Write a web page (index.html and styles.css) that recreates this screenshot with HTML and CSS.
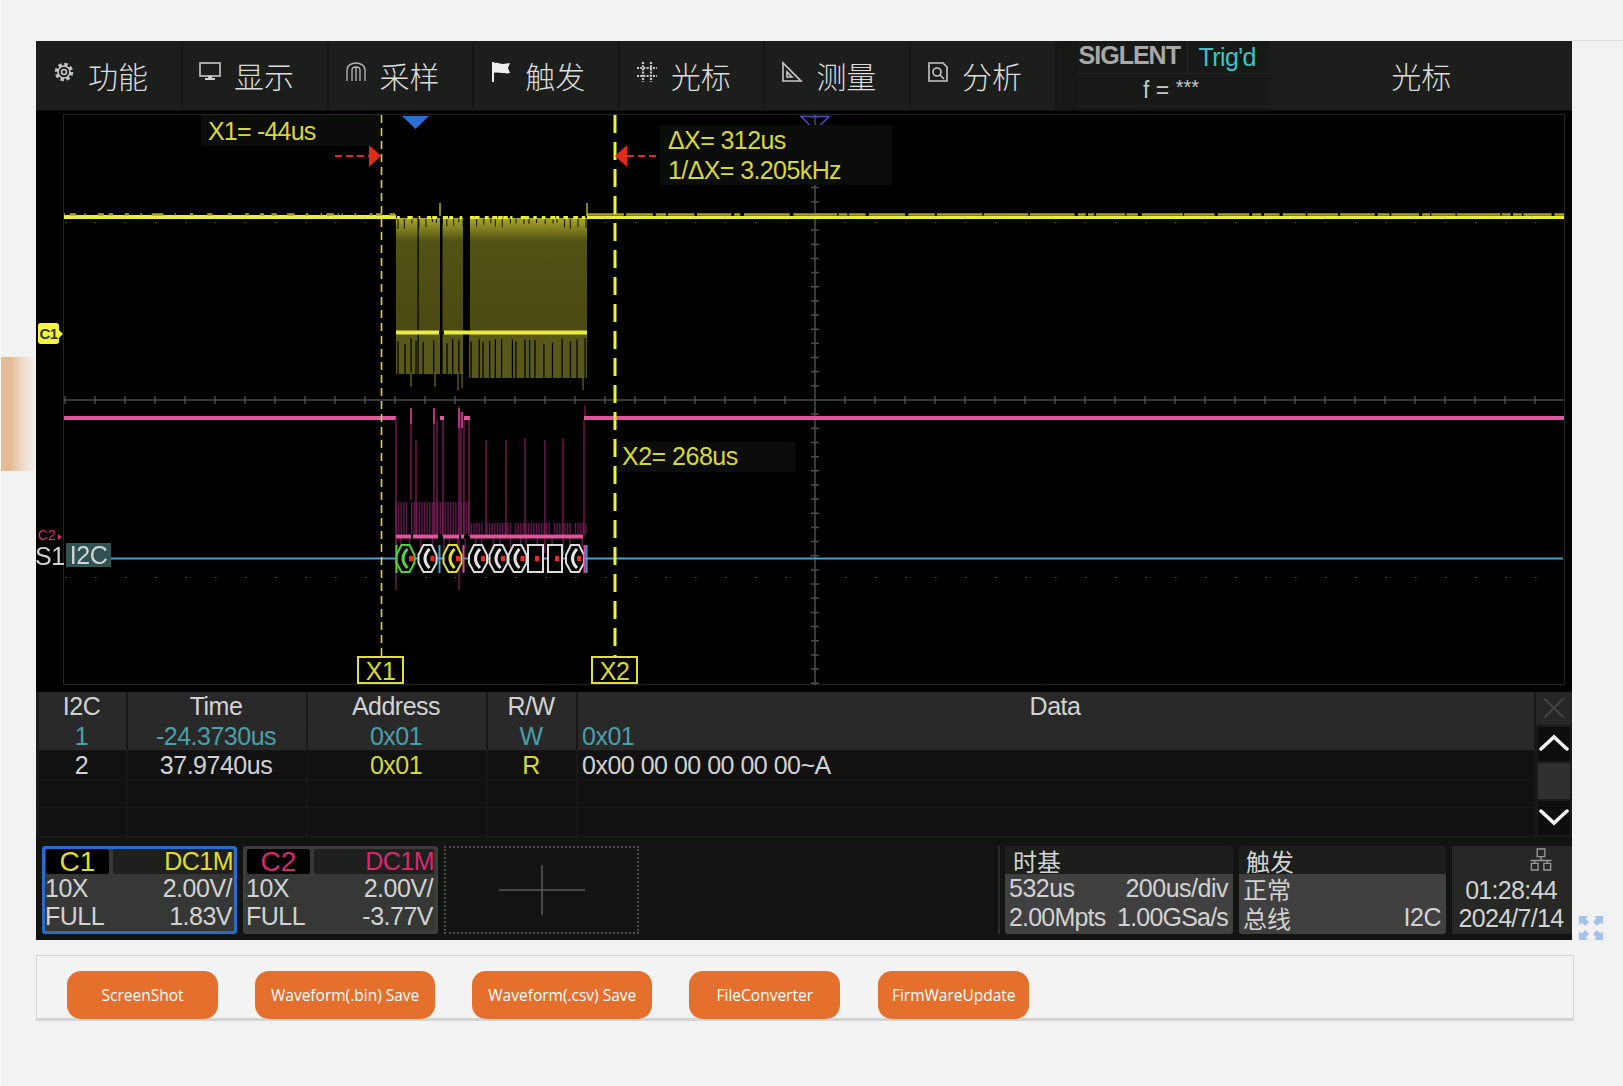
FILE: index.html
```html
<!DOCTYPE html>
<html lang="zh-CN">
<head>
  <meta charset="UTF-8" />
  <title>Web Control</title>
  <link rel="stylesheet" href="styles.css">
</head>
<body>
  <div class="side-glow"></div>
  <div class="top-rule"></div>

  <div class="page">
    <div class="scope-row">
      <div class="scope">

        <nav class="menu">
          <div class="menu-item">
            <svg class="menu-icon" viewBox="0 0 22 22"><circle cx="11" cy="11" r="7.5" class="ic-teeth"/><circle cx="11" cy="11" r="6" class="ic-line"/><circle cx="11" cy="11" r="2.5" class="ic-line"/></svg>
            <span>功能</span>
          </div>
          <div class="menu-item">
            <svg class="menu-icon" viewBox="0 0 22 22"><rect x="1" y="2" width="20" height="13" class="ic-line"/><path d="M9 15h4v2h3v2H6v-2h3z" class="ic-fill"/></svg>
            <span>显示</span>
          </div>
          <div class="menu-item">
            <svg class="menu-icon" viewBox="0 0 22 22"><path d="M2 20V9C2 4 7 2 11 2s9 2 9 7v11M7 20V9c0-2 2-3 4-3s4 1 4 3v11M11 6v14" class="ic-thin"/></svg>
            <span>采样</span>
          </div>
          <div class="menu-item">
            <svg class="menu-icon" viewBox="0 0 22 22"><path d="M2 1h2v20H2zM4 2c4-1 6 1 9 1 2 0 5-1 7-1l-2 5 2 5c-3 1-5 0-8 0-3 0-5-1-8 0z" class="ic-solid"/></svg>
            <span>触发</span>
          </div>
          <div class="menu-item">
            <svg class="menu-icon" viewBox="0 0 22 22"><path d="M7 1v20M15 1v20M1 7h20M1 15h20" class="ic-hash"/></svg>
            <span>光标</span>
          </div>
          <div class="menu-item">
            <svg class="menu-icon" viewBox="0 0 22 22"><path d="M2 2v18h18zM6 11v5h5z" class="ic-line"/></svg>
            <span>测量</span>
          </div>
          <div class="menu-item">
            <svg class="menu-icon" viewBox="0 0 22 22"><path d="M2 2h14l4 4v14H2z" class="ic-line"/><circle cx="10" cy="11" r="4" class="ic-line"/><path d="M13 14l4 4" class="ic-line"/></svg>
            <span>分析</span>
          </div>
          <div class="menu-gap"></div>
          <div class="brand">
            <div class="brand-logo">SIGLENT</div>
            <div class="brand-state">Trig'd</div>
            <div class="brand-freq">f = <span class="stars">***</span></div>
          </div>
          <div class="menu-title">光标</div>
        </nav>

        <div class="screen">
          <svg class="traces" viewBox="36 111 1536 581">
            <defs>
              <linearGradient id="burstFade" x1="0" y1="0" x2="0" y2="1">
                <stop offset="0" stop-color="#a8a82c"/>
                <stop offset="0.2" stop-color="#525214"/>
                <stop offset="1" stop-color="#4a4a12"/>
              </linearGradient>
            </defs>
            <rect x="63.5" y="114.5" width="1501" height="570" class="grid-frame"/>
            <g id="gridLayer"></g>
            <g id="yellowLayer"></g>
            <g id="pinkLayer"></g>
            <path d="M110 558.5H1563" class="bus-line"/>
            <g id="busLayer"></g>
            <path d="M381.5 115V656" class="cursor-thin"/>
            <path d="M615 115V656" class="cursor-thick"/>
            <path d="M402 116h27l-13.500 13z" class="marker-blue"/>
            <path d="M801 116.500h28l-14 14z" class="marker-purple"/>
            <path d="M335 156h34M627 156h32" class="cursor-arrow-line"/>
            <path d="M369 145l12 11-12 11zM627 145l-12 11 12 11z" class="cursor-arrow"/>
          </svg>

          <div class="readout readout-x1">X1= -44us</div>
          <div class="readout readout-delta">ΔX= 312us<br>1/ΔX= 3.205kHz</div>
          <div class="readout readout-x2">X2= 268us</div>
          <div class="cursor-tag cursor-tag-x1">X1</div>
          <div class="cursor-tag cursor-tag-x2">X2</div>
          <div class="ch-badge">C1</div>
          <div class="ch-mark">C2<i></i></div>
          <div class="bus-label">S1</div>
          <div class="bus-tag">I2C</div>
        </div>

        <div class="decode">
          <div class="decode-table">
            <div class="decode-row decode-head">
              <div>I2C</div><div>Time</div><div>Address</div><div>R/W</div><div>Data</div>
            </div>
            <div class="decode-row decode-sel">
              <div>1</div><div>-24.3730us</div><div>0x01</div><div>W</div><div class="cell-data">0x01</div>
            </div>
            <div class="decode-row">
              <div>2</div><div>37.9740us</div><div class="cell-yellow">0x01</div><div class="cell-yellow">R</div><div class="cell-data">0x00 00 00 00 00 00~A</div>
            </div>
            <div class="decode-row"><div></div><div></div><div></div><div></div><div></div></div>
            <div class="decode-row"><div></div><div></div><div></div><div></div><div></div></div>
          </div>
          <div class="decode-side">
            <div class="side-close"><svg viewBox="0 0 22 22"><path d="M2 2l18 18M20 2L2 20"/></svg></div>
            <div class="side-btn"><svg viewBox="0 0 32 20"><path d="M3 16L16 4l13 12"/></svg></div>
            <div class="side-thumb"></div>
            <div class="side-btn"><svg viewBox="0 0 32 20"><path d="M3 4l13 12L29 4"/></svg></div>
          </div>
        </div>

        <div class="status">
          <div class="channel channel-c1">
            <div class="channel-tabs">
              <div class="tab-name">C1</div>
              <div class="tab-coupling">DC1M</div>
            </div>
            <div class="info-row"><span>10X</span><span>2.00V/</span></div>
            <div class="info-row"><span>FULL</span><span>1.83V</span></div>
          </div>
          <div class="channel channel-c2">
            <div class="channel-tabs">
              <div class="tab-name">C2</div>
              <div class="tab-coupling">DC1M</div>
            </div>
            <div class="info-row"><span>10X</span><span>2.00V/</span></div>
            <div class="info-row"><span>FULL</span><span>-3.77V</span></div>
          </div>
          <div class="channel-add"><svg viewBox="0 0 86 50"><path d="M0 25h86M43 0v50"/></svg></div>

          <div class="status-divider"></div>
          <div class="info-box info-time">
            <div class="info-title">时基</div>
            <div class="info-body">
              <div class="info-row"><span>532us</span><span>200us/div</span></div>
              <div class="info-row"><span>2.00Mpts</span><span>1.00GSa/s</span></div>
            </div>
          </div>
          <div class="info-box info-trig">
            <div class="info-title">触发</div>
            <div class="info-body">
              <div class="info-row"><span class="info-cjk">正常</span></div>
              <div class="info-row"><span class="info-cjk">总线</span><span>I2C</span></div>
            </div>
          </div>
          <div class="clock">
            <svg class="clock-net" viewBox="0 0 22 24"><path d="M7 1h8v8H7zM1 16h7v7H1zM14 16h7v7h-7zM11 9v4M4.500 16v-3h13v3M0 13h22"/></svg>
            <div>01:28:44</div>
            <div>2024/7/14</div>
          </div>
        </div>
      </div>

      <svg class="expand" viewBox="0 0 24 24">
        <path d="M0 0h9L6.500 2.500 10 6 6 10 2.500 6.500 0 9zM24 0v9l-2.500-2.500L18 10l-4-4 3.500-3.500L15 0zM0 24v-9l2.500 2.500L6 14l4 4-3.500 3.500L9 24zM24 24h-9l2.500-2.500L14 18l4-4 3.500 3.500L24 15z"/>
      </svg>
    </div>

    <div class="actions">
      <button class="action-btn">ScreenShot</button>
      <button class="action-btn">Waveform(.bin) Save</button>
      <button class="action-btn">Waveform(.csv) Save</button>
      <button class="action-btn">FileConverter</button>
      <button class="action-btn action-btn-last">FirmWareUpdate</button>
    </div>
  </div>

  <script src="waveform.js"></script>
</body>
</html>
```

FILE: styles.css
```css
html, body {
  margin: 0;
  padding: 0;
  height: 100%;
}
body {
  background: #f2f2f2;
  box-shadow: inset 1px 0 #fafafa;
  font-family: "Liberation Sans", "Noto Sans CJK SC", sans-serif;
  overflow: hidden;
}
.side-glow {
  position: absolute;
  left: 1px;
  top: 357px;
  width: 35px;
  height: 114px;
  background: linear-gradient(90deg, #e6bd9b 0%, #e4b994 25%, #f0e2d6 70%, #f3efea 100%);
}
.top-rule {
  position: absolute;
  left: 1572px;
  right: 0;
  top: 40px;
  height: 1px;
  background: #dedede;
}
.page {
  padding: 41px 0 0 36px;
}
.scope-row {
  display: flex;
  align-items: flex-end;
  gap: 7px;
}
.scope {
  width: 1536px;
  height: 899px;
  background: #000;
  display: flex;
  flex-direction: column;
  color: #d2d2d2;
  font-size: 25px;
  letter-spacing: -0.5px;
  filter: blur(0.5px);
}

/* top menu */
.menu {
  height: 70px;
  flex: none;
  display: flex;
  background: #1c1e1c;
  border-bottom: 1px solid #111;
  box-sizing: border-box;
}
.menu-item {
  width: 145.6px;
  flex: none;
  box-sizing: border-box;
  padding: 0 0 2px 16px;
  display: flex;
  align-items: center;
  gap: 13px;
  border-right: 2px solid #141514;
  font-size: 30px;
  font-family: "Noto Sans CJK SC", sans-serif;
  font-weight: 300;
  letter-spacing: 0;
  color: #dcdcdc;
}
.menu-item:first-child {
  width: 147px;
  padding-left: 17px;
}
.menu-icon {
  width: 22px;
  height: 22px;
  flex: none;
  margin-top: -5px;
}
.ic-line { fill: none; stroke: #c8c8c8; stroke-width: 1.6; }
.ic-thin { fill: none; stroke: #b8b8b8; stroke-width: 1.3; }
.ic-fill { fill: #d0d0d0; }
.ic-solid { fill: #eee; }
.ic-teeth { fill: none; stroke: #c0c0c0; stroke-width: 3.5; stroke-dasharray: 3.4 2.5; }
.ic-hash { fill: none; stroke: #c8c8c8; stroke-width: 2.2; stroke-dasharray: 2 1.2; }
.menu-gap {
  width: 21px;
  flex: none;
  background: #161816;
}
.brand {
  width: 193px;
  flex: none;
  display: grid;
  grid-template-columns: 110px 83px;
  grid-template-rows: 33px 33px;
  background: #171917;
}
.brand-logo {
  color: #a8a8a8;
  font-weight: bold;
  font-size: 25px;
  letter-spacing: -1px;
  line-height: 29px;
  padding-left: 1px;
  border-right: 1px solid #242624;
  border-bottom: 1px solid #242624;
  overflow: hidden;
}
.brand-state {
  color: #3cc4c4;
  font-size: 25px;
  letter-spacing: -0.6px;
  line-height: 32px;
  padding-left: 11px;
  border-bottom: 1px solid #242624;
}
.brand-freq {
  grid-column: 1 / 3;
  text-align: center;
  font-size: 23px;
  line-height: 32px;
  color: #c8c8c8;
  border-bottom: 1px solid #242624;
  letter-spacing: 0;
  padding-right: 6px;
}
.stars {
  position: relative;
  top: -4px;
  font-size: 20px;
}
.menu-title {
  flex: 1;
  text-align: center;
  align-self: center;
  font-size: 30px;
  font-family: "Noto Sans CJK SC", sans-serif;
  font-weight: 300;
  letter-spacing: 0;
  color: #dcdcdc;
  margin-top: -2px;
}

/* waveform screen */
.screen {
  position: relative;
  height: 581px;
  flex: none;
  background: #000;
}
.traces {
  display: block;
  width: 1536px;
  height: 581px;
}
.grid-frame { fill: none; stroke: #242424; stroke-width: 1; }
.grid-axis { fill: none; stroke: #4c4c4c; stroke-width: 1.5; }
.grid-dot { fill: none; stroke: #555; stroke-width: 1; }
.bus-line { fill: none; stroke: #45a0d4; stroke-width: 2; }
.cursor-thin { fill: none; stroke: #d8d830; stroke-width: 1.6; stroke-dasharray: 8 5; }
.cursor-thick { fill: none; stroke: #f2f230; stroke-width: 3; stroke-dasharray: 18 9; }
.marker-blue { fill: #2f6fd0; }
.marker-purple { fill: none; stroke: #5050b8; stroke-width: 1.5; }
.cursor-arrow { fill: #e02a1c; }
.cursor-arrow-line { fill: none; stroke: #e02a1c; stroke-width: 2; stroke-dasharray: 7 4; }
.y-bright { fill: none; stroke: #ecec3c; stroke-width: 4; }
.y-mid { fill: none; stroke: #a8a428; stroke-width: 2.5; }
.y-thin { fill: none; stroke: #d8d838; stroke-width: 1.2; }
.y-notch { fill: none; stroke: #1c1c06; stroke-width: 1.1; }
.y-cut { fill: none; stroke: #000; stroke-width: 1.2; }
.p-bright { fill: none; stroke: #e0559c; stroke-width: 4; }
.p-dim { fill: none; stroke: #5e1a48; stroke-width: 1.5; }
.p-soft { fill: none; stroke: #7d1f58; stroke-width: 1.3; }
.p-spike { fill: none; stroke: #b03578; stroke-width: 2; }
.frame { fill: #000; stroke: #dcdcdc; stroke-width: 2; }
.frame-arc { fill: none; stroke: #e4e4e4; stroke-width: 3; }
.frame-green { fill: #000; stroke: #4ed838; stroke-width: 2; }
.frame-arc-green { fill: none; stroke: #4ed838; stroke-width: 3; }
.frame-yellow { fill: #000; stroke: #e0e030; stroke-width: 2; }
.frame-arc-yellow { fill: none; stroke: #e0e030; stroke-width: 3; }
.frame-dot { fill: #e8301c; }

.readout {
  position: absolute;
  background: #0b0d0a;
  color: #d8d834;
  font-size: 25px;
  letter-spacing: -0.5px;
}
.readout-x1 {
  left: 165px;
  top: 4px;
  width: 172px;
  height: 31px;
  line-height: 33px;
  padding-left: 7px;
  letter-spacing: -0.8px;
}
.readout-delta {
  left: 624px;
  top: 14px;
  width: 224px;
  height: 60px;
  line-height: 30px;
  padding-left: 8px;
  letter-spacing: -0.6px;
}
.readout-x2 {
  left: 582px;
  top: 331px;
  width: 173px;
  height: 30px;
  line-height: 29px;
  padding-left: 4px;
}
.cursor-tag {
  position: absolute;
  top: 545px;
  width: 43px;
  height: 24px;
  border: 2px solid #e0e03a;
  color: #d8d834;
  font-size: 25px;
  line-height: 26px;
  text-align: center;
}
.cursor-tag-x1 { left: 321px; }
.cursor-tag-x2 { left: 555px; }
.ch-badge {
  position: absolute;
  left: 2px;
  top: 212px;
  width: 21px;
  height: 21px;
  background: #f6f640;
  border-radius: 3px;
  color: #333;
  font-size: 15px;
  font-weight: bold;
  line-height: 21px;
  text-align: center;
  letter-spacing: -0.5px;
}
.ch-badge::after {
  content: "";
  position: absolute;
  right: -4px;
  top: 7px;
  border-left: 4px solid #f6f640;
  border-top: 4px solid transparent;
  border-bottom: 4px solid transparent;
}
.ch-mark {
  position: absolute;
  left: 2px;
  top: 416px;
  color: #d82c80;
  font-size: 14px;
  line-height: 16px;
  letter-spacing: 0;
}
.ch-mark i {
  display: inline-block;
  margin-left: 2px;
  border-left: 4px solid #d82c80;
  border-top: 3px solid transparent;
  border-bottom: 3px solid transparent;
}
.bus-label {
  position: absolute;
  left: -1px;
  top: 431px;
  line-height: 28px;
  font-size: 25px;
  color: #d0d0d0;
}
.bus-tag {
  position: absolute;
  left: 30px;
  top: 432px;
  width: 45px;
  height: 24px;
  line-height: 25px;
  background: #2f5353;
  color: #d4d4d4;
  text-align: center;
  font-size: 25px;
}

/* decode table */
.decode {
  height: 145px;
  flex: none;
  display: flex;
  background: #191a19;
}
.decode-table {
  width: 1500px;
  flex: none;
  padding-left: 3px;
  box-sizing: border-box;
}
.decode-row {
  display: grid;
  grid-template-columns: 89px 180px 180px 90px 958px;
  height: 28.500px;
  line-height: 28px;
  background: #111;
  border-bottom: 1px solid #1b1b1b;
  box-sizing: border-box;
}
.decode-row > div {
  text-align: center;
  border-right: 2px solid #181818;
  padding-right: 2px;
  white-space: nowrap;
}
.decode-row > .cell-data {
  text-align: left;
  padding-left: 4px;
}
.decode-row > .cell-yellow { color: #d8d834; }
.decode-head {
  height: 30px;
  background: #292929;
  border-bottom: 0;
}
.decode-head > div { border-right-color: #1a1a1a; }
.decode-sel {
  height: 29px;
  background: #292929;
  color: #4b9fab;
  border-bottom: 1px solid #151515;
}
.decode-side {
  flex: 1;
  display: flex;
  flex-direction: column;
  align-items: center;
  gap: 2px;
}
.decode-side svg {
  display: block;
  fill: none;
  stroke-linecap: round;
}
.side-close {
  width: 100%;
  height: 33px;
  background: #262626;
  display: flex;
  justify-content: center;
  align-items: center;
}
.side-close svg {
  width: 22px;
  height: 22px;
  stroke: #444;
  stroke-width: 2;
  margin-top: -2px;
}
.side-btn {
  width: 32px;
  height: 34px;
  background: #0e0e0e;
  display: flex;
  justify-content: center;
  align-items: center;
}
.side-btn svg {
  width: 32px;
  height: 20px;
  stroke: #f4f4f4;
  stroke-width: 3.5;
  margin-top: -3px;
}
.side-thumb {
  width: 32px;
  height: 36px;
  background: #303030;
}

/* status bar */
.status {
  flex: 1;
  display: flex;
  gap: 6px;
  padding: 9px 0 6px 6px;
  background: #121412;
}
.channel {
  width: 195px;
  box-sizing: border-box;
  border: 3px solid #3c3e3c;
  border-radius: 3px;
  background: #363836;
}
.channel-c1 { border-color: #2a6cc8; }
.channel-tabs {
  display: flex;
  gap: 4px;
  height: 25px;
  line-height: 25px;
  background: #363836;
  padding-right: 1px;
}
.tab-name {
  width: 63px;
  margin-left: 1px;
  background: #000;
  border-radius: 3px;
  text-align: center;
  font-size: 28px;
  letter-spacing: 0;
}
.tab-coupling {
  flex: 1;
  background: #1e201e;
  border-radius: 3px;
  text-align: right;
}
.channel-c1 .tab-name, .channel-c1 .tab-coupling { color: #dede2e; }
.channel-c2 .tab-name, .channel-c2 .tab-coupling { color: #d8286f; }
.info-row {
  display: flex;
  justify-content: space-between;
  height: 28px;
  line-height: 28px;
  padding: 0 2px 0 0;
}
.channel-add {
  width: 195px;
  box-sizing: border-box;
  border: 2px dotted #4c4c4c;
  display: flex;
  justify-content: center;
  align-items: center;
}
.channel-add svg {
  width: 86px;
  height: 50px;
  stroke: #585858;
  stroke-width: 1.5;
  fill: none;
}
.status-divider {
  width: 2px;
  margin-left: 353px;
  background: #2a2c2a;
}
.info-box {
  display: flex;
  flex-direction: column;
  background: #1c1e1c;
  border-radius: 3px;
}
.info-time { width: 228px; margin-left: -1px; }
.info-trig { width: 207px; }
.info-title {
  height: 28px;
  line-height: 33px;
  padding-left: 8px;
  font-size: 24px;
  letter-spacing: 0;
}
.info-trig .info-title { padding-left: 7px; }
.info-body {
  flex: 1;
  background: #404040;
  padding: 0 5px 0 4px;
  border-radius: 0 0 3px 3px;
  white-space: nowrap;
}
.info-body .info-row { height: 29px; padding: 0; }
.info-time .info-row:last-child { letter-spacing: -0.8px; }
.info-cjk {
  line-height: 33px;
  font-size: 24px;
  letter-spacing: 0;
}
.clock {
  flex: 1;
  background: #262826;
  border-radius: 3px 0 0 3px;
  text-align: center;
  line-height: 28px;
  letter-spacing: -0.7px;
  padding-right: 2px;
}
.clock-net {
  display: block;
  width: 22px;
  height: 23px;
  margin: 2px 0 5px 78px;
  fill: none;
  stroke: #999;
  stroke-width: 1.4;
}

.expand {
  width: 24px;
  height: 24px;
  flex: none;
  fill: #a4c1ec;
}

/* action buttons */
.actions {
  margin-top: 15px;
  width: 1538px;
  height: 66px;
  box-sizing: border-box;
  display: flex;
  gap: 37px;
  padding: 15px 0 0 30px;
  background: #f3f3f3;
  border: 1px solid #d4d4d4;
  border-bottom-width: 3px;
}
.action-btn {
  height: 48px;
  min-width: 151px;
  padding: 0 16px;
  border: none;
  border-radius: 14px;
  background: #e56f2d;
  color: #fff;
  font-family: "Open Sans", sans-serif;
  font-size: 15.500px;
  white-space: nowrap;
  cursor: pointer;
}
.action-btn-last {
  margin-left: 1px;
  padding: 0 12px;
}
```

FILE: waveform.js
```js
// draws grid, traces and i2c frames into the svg
let seed = 17;

function rnd() {
  seed = (seed * 16807) % 2147483647;
  return seed / 2147483647;
}

function addPath(layerId, d, cls) {
  const el = document.createElementNS('http://www.w3.org/2000/svg', 'path');
  el.setAttribute('d', d);
  el.setAttribute('class', cls);
  document.getElementById(layerId).appendChild(el);
  return el;
}

function addRect(layerId, x, y, w, h, fill) {
  const el = addPath(layerId, `M${x} ${y}h${w}v${h}h${-w}z`, '');
  el.setAttribute('fill', fill);
}

function drawGrid() {
  let d = 'M64 400H1564M815 115V685';
  for (let x = 65; x < 1565; x += 30) d += `M${x} 396v8`;
  for (let y = 400 - 14.16 * 20; y < 685; y += 14.16) d += `M811 ${y}h8`;
  addPath('gridLayer', d, 'grid-axis');
  let dots = '';
  for (let x = 65; x < 1565; x += 30) {
    dots += `M${x} 222.500h1.500M${x} 577.500h1.500`;
  }
  addPath('gridLayer', dots, 'grid-dot');
}

function drawYellow() {
  addPath('yellowLayer', 'M64 217H396', 'y-bright');
  let noise = '';
  for (let x = 64; x < 390; x += 2 + rnd() * 16) {
    noise += `M${x} 214.500h${1 + rnd() * 6}`;
  }
  addPath('yellowLayer', noise, 'y-mid');

  // flat part after the burst, the top edge is broken up
  let flat = '';
  for (let x = 587; x < 1564; ) {
    const w = Math.min(6 + rnd() * 40, 1564 - x);
    flat += `M${x} 214.500h${w}`;
    x += w + 1 + rnd() * 3;
  }
  addPath('yellowLayer', flat, 'y-mid');
  addPath('yellowLayer', 'M587 217.500H1564', 'y-bright').style.strokeWidth = 2.8;

  // burst body
  addRect('yellowLayer', 396, 218, 191, 114, 'url(#burstFade)');
  addRect('yellowLayer', 396, 334, 73, 40, '#58581a');
  addRect('yellowLayer', 469, 334, 118, 44, '#58581a');
  let cuts = '';
  for (let x = 398; x < 586; x += 3 + rnd() * 8) {
    cuts += `M${x} ${338 + rnd() * 6}V380`;
  }
  addPath('yellowLayer', cuts, 'y-cut');
  addRect('yellowLayer', 396, 374, 73, 6, '#000');
  addPath('yellowLayer', 'M411 372V387M435 372V387M458 372V390M583 376V390M462 372V388', 'y-thin').style.stroke = '#6c6c18';

  let top = '';
  for (let x = 397; x < 586; x += 5 + rnd() * 6) {
    top += `M${x} 217.500h${2 + rnd() * 4}`;
  }
  addPath('yellowLayer', top, 'y-bright').style.strokeWidth = 3;
  let notch = '';
  for (let x = 398; x < 586; x += 4 + rnd() * 5) {
    notch += `M${x} 219v${3 + rnd() * 7}`;
  }
  addPath('yellowLayer', notch, 'y-notch');

  addRect('yellowLayer', 417.500, 216, 1.200, 160, '#000');
  addRect('yellowLayer', 440, 214, 2.500, 175, '#000');
  addRect('yellowLayer', 463, 214, 7, 118, '#000');
  addRect('yellowLayer', 463, 334, 6, 56, '#000');
  addPath('yellowLayer', 'M396 332.500H439M444 332.500H587', 'y-bright');
  addPath('yellowLayer', 'M440 216V203M587 216V203', 'y-thin');
}

function drawPink() {
  addPath('pinkLayer', 'M64 418H396M590 418H1564', 'p-bright');

  let comb = '';
  for (let x = 396; x < 586; x += 2.600) {
    const top = x < 469 ? 502 : 523;
    if (rnd() > 0.2) comb += `M${x} ${top}V534`;
  }
  for (let x = 396; x < 586; x += 5 + rnd() * 8) {
    comb += `M${x} 538v${6 + rnd() * 14}`;
  }
  addPath('pinkLayer', comb, 'p-dim');
  addPath('pinkLayer', 'M396 418V590M411 408V500M416 440V536M434 410V536M437 420V536M443 420V536M459 406V590M461 412V536M464 420V536M469 420V536', 'p-soft');
  addPath('pinkLayer', 'M486 440V536M506 440V536M525 438V536M545 440V536M563 438V536', 'p-soft');
  addPath('pinkLayer', 'M584 420V536M585 405V420', 'p-soft');
  addPath('pinkLayer', 'M411 408V424M434 408V424M459 408V428M462 412V428', 'p-spike');
  addPath('pinkLayer', 'M440 418h4M464 418h6M584 418h8', 'p-bright');
  addPath('pinkLayer', 'M396 536.500H411M413 536.500H438M443 536.500H459M461 536.500H464M470 536.500H583', 'p-bright');
}

function drawFrame(cx, color) {
  const suffix = color ? '-' + color : '';
  const pts = [[-4, 545], [4, 545], [9, 555], [9, 563], [4, 572], [-4, 572], [-9, 563], [-9, 555]];
  const d = 'M' + pts.map(p => `${cx + p[0]} ${p[1]}`).join('L') + 'z';
  addPath('busLayer', d, 'frame' + suffix);
  addPath('busLayer', `M${cx + 2} 549Q${cx - 7} 558.500 ${cx + 2} 568`, 'frame-arc' + suffix);
}

function drawBus() {
  drawFrame(405.5, 'green');
  drawFrame(427.5);
  drawFrame(452.5, 'yellow');
  drawFrame(478);
  drawFrame(498.5);
  drawFrame(517.5);
  addPath('busLayer', 'M528 545h15v27h-15zM548 545h14v27h-14z', 'frame');
  drawFrame(575);

  const dots = [411, 432.5, 458, 483, 503, 522.5, 537, 557, 579];
  addPath('busLayer', dots.map(x => `M${x - 2} 556h4v5h-4z`).join(''), 'frame-dot');

  const bars = [[395.5, '#5ccc30'], [438.5, '#45a0d4'], [462.5, '#d84c98'], [585.5, '#45a0d4'], [583.5, '#d84c98']];
  bars.forEach(b => {
    addPath('busLayer', `M${b[0]} 545h2v28h-2z`, '').setAttribute('fill', b[1]);
  });
}

drawGrid();
drawYellow();
drawPink();
drawBus();
```
